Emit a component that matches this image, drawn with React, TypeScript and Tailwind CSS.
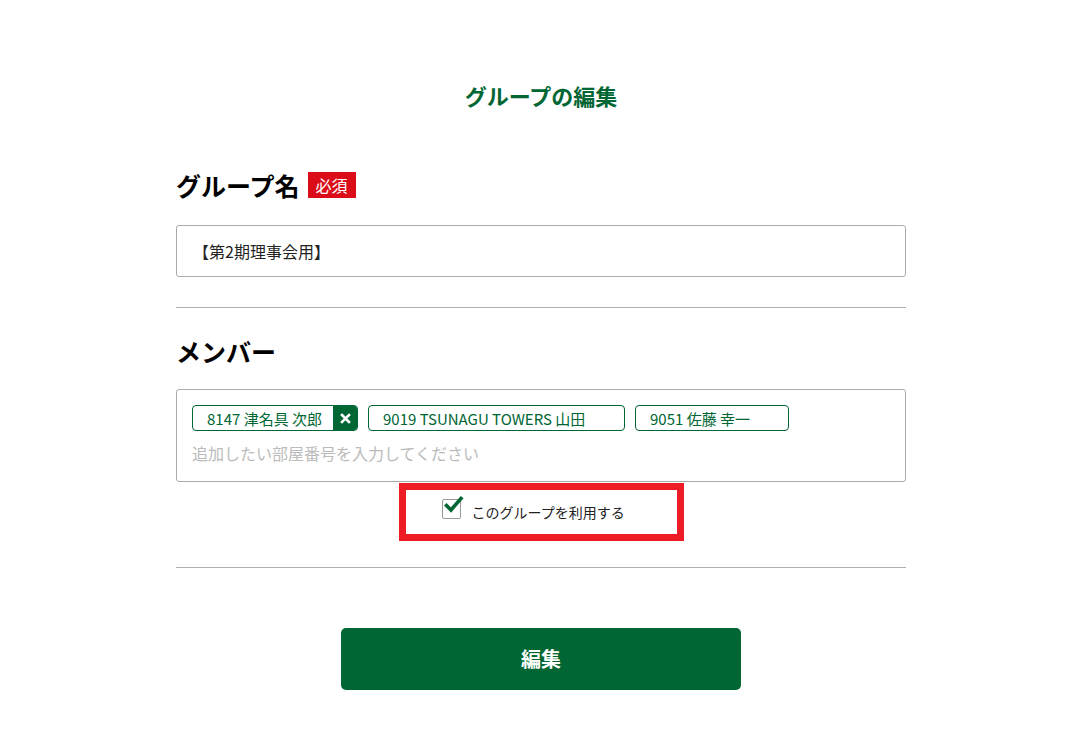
import React from "react";

const font = { fontFamily: '"Noto Sans CJK JP", "Noto Sans", sans-serif' };

function Tag({ label, removable, width }: { label: string; removable?: boolean; width: string }) {
  return (
    <div className={`flex h-[26px] items-stretch overflow-hidden rounded-[4px] border border-[#006633] ${width}`}>
      <span className="flex flex-1 items-center pl-[14px] text-[15px] leading-none text-[#006633]">{label}</span>
      {removable && (
        <span className="flex w-[24px] items-center justify-center bg-[#006633]">
          <svg width="11" height="11" viewBox="0 0 11 11">
            <path d="M2 2 L9 9 M9 2 L2 9" stroke="white" strokeWidth="2.6" strokeLinecap="square" />
          </svg>
        </span>
      )}
    </div>
  );
}

export default function App() {
  return (
    <div className="min-h-[745px] w-full bg-white pl-[4px] text-black" style={font}>
      <div className="mx-auto flex w-[730px] flex-col pt-[80px]">
        <h1 className="text-center text-[22px] font-bold leading-[30px] text-[#006633]">グループの編集</h1>

        <div className="mt-[60px] flex items-center gap-[8px]">
          <h2 className="text-[25px] font-bold leading-[30px]">グループ名</h2>
          <span className="flex h-[26px] items-center bg-[#dc0d18] px-[8px] text-[16px] leading-none text-white">必須</span>
        </div>

        <div className="mt-[25px] flex h-[52px] items-center rounded-[3px] border border-[#aaaaaa] pl-[16px] text-[16px] text-[#222]">
          【第2期理事会用】
        </div>

        <hr className="mt-[30px] border-t border-[#b0b0b0]" />

        <h2 className="mt-[28px] text-[25px] font-bold leading-[30px]">メンバー</h2>

        <div className="mt-[23px] flex h-[93px] flex-col rounded-[3px] border border-[#aaaaaa] px-[15px] pt-[15px]">
          <div className="flex gap-[10px]">
            <Tag label="8147 津名具 次郎" removable width="w-[166px]" />
            <Tag label="9019 TSUNAGU TOWERS 山田" width="w-[257px]" />
            <Tag label="9051 佐藤 幸一" width="w-[154px]" />
          </div>
          <div className="mt-[11px] text-[16px] leading-[22px] text-[#bbbbbb]">追加したい部屋番号を入力してください</div>
        </div>

        <div className="mt-[1px] flex justify-center">
          <div className="flex h-[58px] w-[285px] items-start border-[7px] border-[#ee1d25] pl-[36px] pt-[5px]">
            <label className="flex items-center gap-[11px]">
              <span className="relative h-[20px] w-[19px] rounded-[2px] border border-[#999] bg-white">
                <svg className="absolute left-[1px] top-[-5px]" width="20" height="20" viewBox="0 0 20 20">
                  <path d="M2.5 10.5 L7 15 L17 3.5" fill="none" stroke="#006633" strokeWidth="3.6" strokeLinecap="square" />
                </svg>
              </span>
              <span className="mt-[7px] text-[14px] text-[#222]">このグループを利用する</span>
            </label>
          </div>
        </div>

        <hr className="mt-[26px] border-t border-[#b0b0b0]" />

        <button className="mx-auto mt-[60px] flex h-[62px] w-[400px] items-center justify-center rounded-[5px] bg-[#006633] text-[20px] font-bold text-white">
          編集
        </button>
      </div>
    </div>
  );
}
